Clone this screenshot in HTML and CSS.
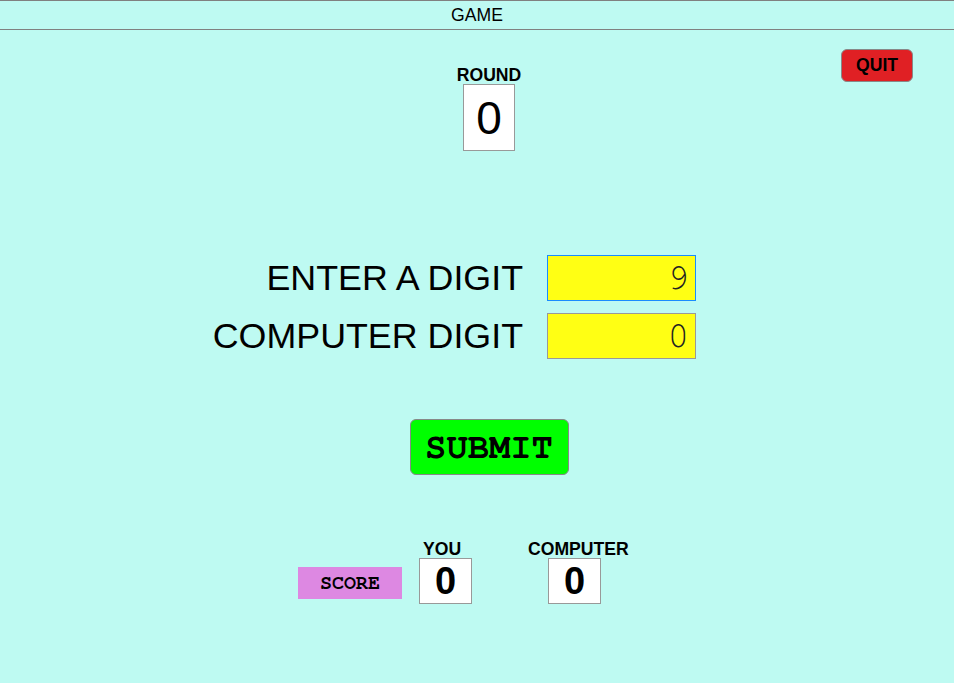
FILE: index.html
```html
<!DOCTYPE html>
<html>
<head>
<meta charset="utf-8">
<title>GAME</title>
<link rel="stylesheet" href="styles.css">
</head>
<body>
<header class="topbar">GAME</header>
<main class="game">
  <section class="top-row">
    <div class="round">
      <div class="label">ROUND</div>
      <div class="round-box">0</div>
    </div>
    <button class="quit">QUIT</button>
  </section>

  <section class="digits">
    <label class="digit-label" for="you">ENTER A DIGIT</label>
    <input class="digit-input focused" id="you" type="text" value="9">
    <label class="digit-label" for="cpu">COMPUTER DIGIT</label>
    <input class="digit-input" id="cpu" type="text" value="0" readonly>
  </section>

  <section class="submit-row">
    <button class="submit">SUBMIT</button>
  </section>

  <section class="score-row">
    <div class="score-tag">SCORE</div>
    <div class="score-col you">
      <div class="label">YOU</div>
      <div class="score-box">0</div>
    </div>
    <div class="score-col cpu">
      <div class="label">COMPUTER</div>
      <div class="score-box">0</div>
    </div>
  </section>
</main>
</body>
</html>
```
FILE: styles.css
```css
html, body {
  margin: 0;
  padding: 0;
}
body {
  background: #befaf2;
  font-family: "Liberation Sans", Arial, sans-serif;
  color: #000;
  height: 683px;
}
.topbar {
  border-top: 1px solid #808080;
  border-bottom: 1px solid #808080;
  height: 28px;
  line-height: 28px;
  text-align: center;
  font-size: 17.6px;
}
.label {
  font-weight: bold;
  font-size: 17.6px;
  line-height: 18px;
}
.top-row {
  display: grid;
  grid-template-columns: 1fr auto 1fr;
  padding-left: 24px;
  padding-top: 19px;
  align-items: start;
}
.round {
  grid-column: 2;
  margin-top: 17px;
  display: flex;
  flex-direction: column;
  align-items: center;
}
.round-box {
  width: 50px;
  height: 65px;
  background: #fff;
  border: 1px solid #999;
  font-size: 46px;
  display: flex;
  align-items: center;
  justify-content: center;
}
.quit {
  grid-column: 3;
  justify-self: end;
  margin-right: 41px;
  width: 72px;
  height: 33px;
  background: #e02024;
  border: 1px solid #888;
  border-radius: 6px;
  font-family: "Liberation Sans", Arial, sans-serif;
  font-weight: bold;
  font-size: 17.6px;
  color: #000;
  padding: 0;
}
.digits {
  display: grid;
  grid-template-columns: 523px 149px;
  column-gap: 24px;
  row-gap: 12px;
  align-items: center;
  margin-top: 104px;
}
.digit-label {
  text-align: right;
  font-size: 35.8px;
}
.digit-input {
  box-sizing: border-box;
  width: 149px;
  height: 46px;
  background: #ffff14;
  border: 1px solid #999;
  text-align: right;
  font-family: FreeMono, "Liberation Mono", monospace;
  font-size: 36px;
  color: #222;
  padding: 0 6px;
  outline: none;
}
.digit-input.focused {
  border-color: #1a8cff;
}
.submit-row {
  display: flex;
  justify-content: center;
  padding-left: 24px;
  margin-top: 60px;
}
.submit {
  width: 159px;
  height: 56px;
  background: #00ff00;
  border: 1px solid #888;
  border-radius: 6px;
  font-family: FreeMono, "Liberation Mono", monospace;
  font-weight: bold;
  font-size: 35.5px;
  color: #000;
  padding: 0;
}
.score-row {
  display: flex;
  align-items: flex-end;
  margin-left: 298px;
  margin-top: 66px;
}
.score-tag {
  width: 104px;
  height: 32px;
  margin-bottom: 5px;
  background: #dd88e2;
  display: flex;
  align-items: center;
  justify-content: center;
  font-family: FreeMono, "Liberation Mono", monospace;
  font-weight: bold;
  font-size: 20px;
}
.score-col {
  display: flex;
  flex-direction: column;
}
.score-col .label {
  line-height: 17px;
}
.score-col.you {
  margin-left: 17px;
  width: 52px;
}
.score-col.you .label {
  padding-left: 4px;
}
.score-col.cpu {
  margin-left: 57px;
}
.score-col.cpu .score-box {
  margin-left: 20px;
}
.score-box {
  width: 51px;
  height: 44px;
  background: #fff;
  border: 1px solid #999;
  font-weight: bold;
  font-size: 38px;
  display: flex;
  align-items: center;
  justify-content: center;
}
```
